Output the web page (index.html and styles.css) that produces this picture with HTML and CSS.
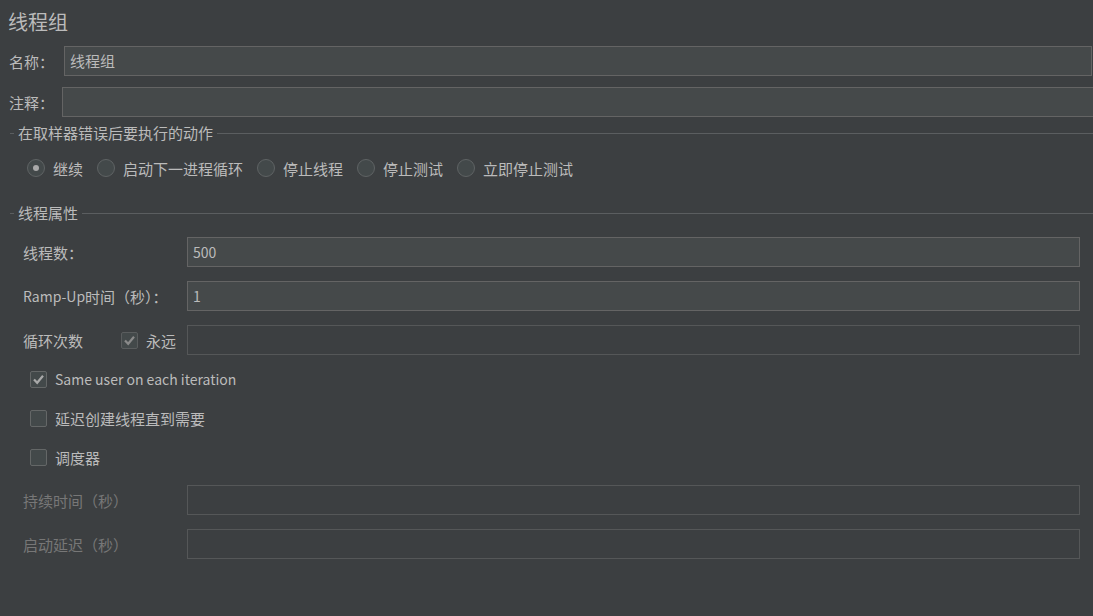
FILE: index.html
```html
<!DOCTYPE html>
<html lang="zh">
<head>
<meta charset="utf-8">
<title>线程组</title>
<link rel="stylesheet" href="styles.css">
</head>
<body>
<div class="page">
  <div class="title">线程组</div>
  <div class="row row-name">
    <span class="lbl lbl-top">名称：</span>
    <div class="field">线程组</div>
  </div>
  <div class="row row-comment">
    <span class="lbl lbl-top">注释：</span>
    <div class="field field-wide"></div>
  </div>

  <div class="section-head">
    <span class="dash"></span><span class="sec-title">在取样器错误后要执行的动作</span><span class="line"></span>
  </div>
  <div class="radios">
    <div class="radio-item"><span class="radio on"></span><span>继续</span></div>
    <div class="radio-item"><span class="radio"></span><span>启动下一进程循环</span></div>
    <div class="radio-item"><span class="radio"></span><span>停止线程</span></div>
    <div class="radio-item"><span class="radio"></span><span>停止测试</span></div>
    <div class="radio-item"><span class="radio"></span><span>立即停止测试</span></div>
  </div>

  <div class="section-head sec2">
    <span class="dash"></span><span class="sec-title">线程属性</span><span class="line"></span>
  </div>
  <div class="props">
    <div class="prow">
      <span class="plbl">线程数：</span>
      <div class="field pfield"><span class="lat">500</span></div>
    </div>
    <div class="prow">
      <span class="plbl"><span class="lat">Ramp-Up</span>时间（秒）：</span>
      <div class="field pfield"><span class="lat">1</span></div>
    </div>
    <div class="prow">
      <span class="plbl loop">循环次数
        <span class="forever"><span class="check dim"><svg viewBox="0 0 17 17" width="17" height="17"><path d="M4 8.5 L7.2 11.8 L13 4.8" fill="none" stroke="#8a8a8a" stroke-width="2.2"/></svg></span><span>永远</span></span>
      </span>
      <div class="field pfield disabled"></div>
    </div>
    <div class="crow first"><span class="check"><svg viewBox="0 0 17 17" width="17" height="17"><path d="M4 8.5 L7.2 11.8 L13 4.8" fill="none" stroke="#a9a9a9" stroke-width="2.2"/></svg></span><span class="lat">Same user on each iteration</span></div>
    <div class="crow"><span class="check"></span><span>延迟创建线程直到需要</span></div>
    <div class="crow"><span class="check"></span><span>调度器</span></div>
    <div class="prow dis first-dis">
      <span class="plbl">持续时间（秒）</span>
      <div class="field pfield disabled"></div>
    </div>
    <div class="prow dis">
      <span class="plbl">启动延迟（秒）</span>
      <div class="field pfield disabled"></div>
    </div>
  </div>
</div>
</body>
</html>
```

FILE: styles.css
```css
html, body {
  margin: 0;
  padding: 0;
  background: #3c3f41;
  overflow: hidden;
  height: 616px;
}
body {
  font-family: "Noto Sans CJK SC", "Noto Sans", sans-serif;
  font-size: 15px;
  color: #bbbbbb;
}
.page {
  width: 1093px;
}
.lat {
  font-size: 14px;
}
.title {
  font-size: 20px;
  line-height: 24px;
  height: 24px;
  margin-top: 10px;
  padding-left: 8px;
  color: #bbbbbb;
}
.row {
  display: flex;
  align-items: center;
  height: 30px;
}
.row-name {
  margin-top: 12px;
}
.row-comment {
  margin-top: 11px;
}
.lbl {
  padding-left: 9px;
  white-space: nowrap;
  box-sizing: border-box;
  flex: none;
}
.row-name .lbl { width: 64px; }
.row-comment .lbl { width: 62px; }
.field {
  box-sizing: border-box;
  height: 30px;
  background: #45494a;
  border: 1px solid #646464;
  padding: 0 5px;
  line-height: 28px;
  color: #bbbbbb;
  flex: 1;
}
.row-name .field { margin-right: 1px; }
.field-wide { margin-right: -8px; }
.section-head {
  display: flex;
  align-items: center;
  height: 20px;
  margin-top: 6px;
}
.dash {
  width: 4px;
  height: 1px;
  background: #5b5e60;
  margin-left: 10px;
}
.sec-title {
  padding: 0 4px;
  line-height: 20px;
}
.line {
  flex: 1;
  height: 1px;
  background: #5b5e60;
}
.radios {
  display: flex;
  align-items: center;
  gap: 14px;
  padding-left: 27px;
  margin-top: 15px;
  height: 20px;
}
.radio-item {
  display: flex;
  align-items: center;
  gap: 8px;
  white-space: nowrap;
}
.radio {
  box-sizing: border-box;
  width: 18px;
  height: 18px;
  border-radius: 50%;
  border: 1px solid #5f6364;
  background: #43494a;
  display: flex;
  align-items: center;
  justify-content: center;
}
.radio.on::after {
  content: "";
  width: 6px;
  height: 6px;
  border-radius: 50%;
  background: #a9a9a9;
}
.sec2 {
  margin-top: 25px;
}
.props {
  padding-left: 23px;
  padding-right: 13px;
}
.prow {
  display: flex;
  align-items: center;
  height: 30px;
  margin-top: 14px;
}
.plbl {
  width: 164px;
  flex: none;
  white-space: nowrap;
  display: flex;
  align-items: center;
}
.forever {
  display: flex;
  align-items: center;
  gap: 8px;
  margin-left: 38px;
}
.pfield { flex: 1; }
.pfield.disabled {
  background: #3c3f41;
  border-color: #555758;
}
.check {
  box-sizing: border-box;
  width: 17px;
  height: 17px;
  border: 1px solid #646767;
  border-radius: 2px;
  background: #43494a;
  display: inline-flex;
  align-items: center;
  justify-content: center;
  flex: none;
}
.check svg { display: block; margin: -1px; }
.check.dim { border-color: #5a5d5e; }
.crow {
  display: flex;
  align-items: center;
  gap: 8px;
  height: 20px;
  margin-top: 19px;
  padding-left: 7px;
  white-space: nowrap;
}
.crow.first { margin-top: 14px; }
.dis .plbl { color: #777777; }
.first-dis { margin-top: 18px; }
```
